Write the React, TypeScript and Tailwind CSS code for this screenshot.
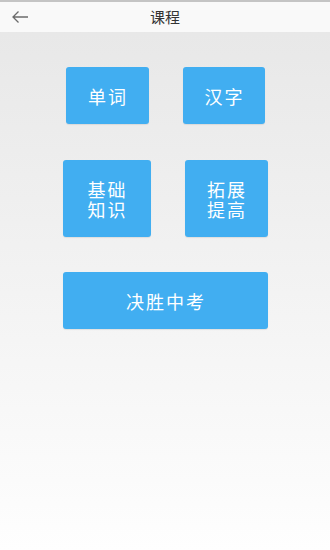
const font = { fontFamily: '"Noto Sans CJK SC", "Noto Sans", sans-serif' };

function Tile({ w, h, children }: { w: string; h: string; children: React.ReactNode }) {
  return (
    <button
      className={`${w} ${h} flex items-center justify-center rounded-[3px] bg-[#41aef1] pl-[2px] text-[18px] leading-[20px] tracking-[2px] text-white shadow-[0_1px_1px_rgba(0,0,0,0.08)]`}
    >
      {children}
    </button>
  );
}

export default function App() {
  return (
    <div className="flex h-[550px] w-[330px] flex-col" style={font}>
      {/* header */}
      <header className="relative flex h-[32px] shrink-0 items-center justify-center border-t-2 border-[#c4c4c4] bg-[#f9f9f9]">
        <button className="absolute left-[11px] top-[8px]">
          <svg width="18" height="14" viewBox="0 0 18 14" fill="none" stroke="#6b6b6b" strokeWidth="1.3">
            <path d="M17 7H2M7.5 1.5L2 7l5.5 5.5" />
          </svg>
        </button>
        <h1 className="text-[15px] text-[#333]">课程</h1>
      </header>

      {/* content */}
      <main className="flex flex-1 flex-col items-center bg-gradient-to-b from-[#e8e8e8] to-[#fefefe] pt-[35px]">
        <div className="flex gap-[34px]">
          <Tile w="w-[83px]" h="h-[57px]">单词</Tile>
          <Tile w="w-[82px]" h="h-[57px]">汉字</Tile>
        </div>
        <div className="mt-[36px] flex gap-[34px]">
          <Tile w="w-[88px]" h="h-[77px]">
            基础
            <br />
            知识
          </Tile>
          <Tile w="w-[83px]" h="h-[77px]">
            拓展
            <br />
            提高
          </Tile>
        </div>
        <div className="mt-[35px]">
          <Tile w="w-[205px]" h="h-[57px]">决胜中考</Tile>
        </div>
      </main>
    </div>
  );
}
